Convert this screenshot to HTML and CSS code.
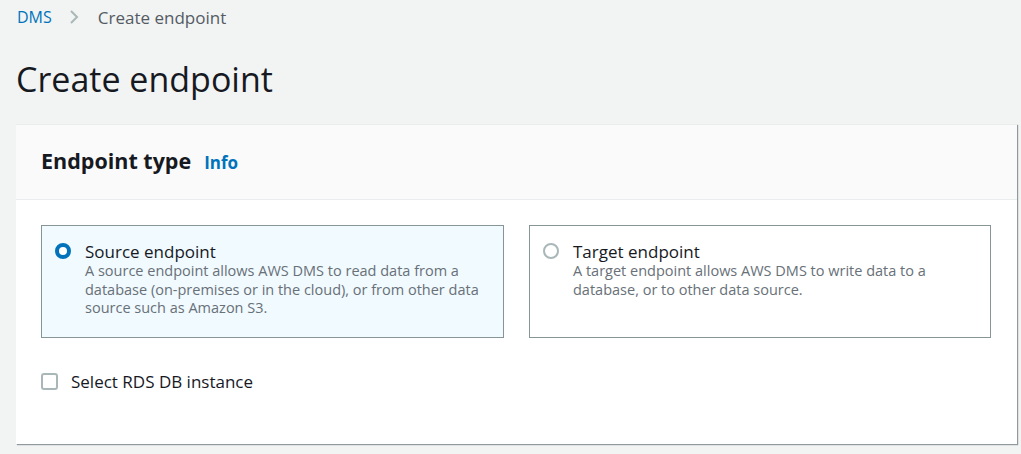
FILE: index.html
```html
<!DOCTYPE html>
<html>
<head>
<meta charset="utf-8">
<link rel="stylesheet" href="styles.css">
</head>
<body>
<nav class="crumbs">
  <a class="crumb-link" href="#">DMS</a>
  <svg class="chev" width="12" height="16" viewBox="0 0 12 16"><path d="M3 2 L9 8 L3 14" fill="none" stroke="#aab7b8" stroke-width="2"/></svg>
  <span class="crumb-current">Create endpoint</span>
</nav>
<h1 class="page-title">Create endpoint</h1>
<section class="panel">
  <header class="panel-head">
    <h2 class="panel-title">Endpoint type</h2>
    <a class="info" href="#">Info</a>
  </header>
  <div class="panel-body">
    <div class="tiles">
      <label class="tile tile-selected">
        <span class="radio radio-on"></span>
        <span class="tile-text">
          <span class="tile-label">Source endpoint</span>
          <span class="tile-desc">A source endpoint allows AWS DMS to read data from a database (on-premises or in the cloud), or from other data source such as Amazon S3.</span>
        </span>
      </label>
      <label class="tile">
        <span class="radio"></span>
        <span class="tile-text">
          <span class="tile-label">Target endpoint</span>
          <span class="tile-desc">A target endpoint allows AWS DMS to write data to a database, or to other data source.</span>
        </span>
      </label>
    </div>
    <label class="check-row">
      <span class="checkbox"></span>
      <span class="check-label">Select RDS DB instance</span>
    </label>
  </div>
</section>
</body>
</html>
```

FILE: styles.css
```css
* { box-sizing: border-box; }
html, body { margin: 0; padding: 0; }
body {
  background: #f2f3f3;
  font-family: "Open Sans", "Liberation Sans", sans-serif;
  color: #16191f;
  width: 1021px;
  height: 454px;
  overflow: hidden;
}
.crumbs {
  display: flex;
  align-items: center;
  height: 34px;
  padding-left: 17px;
  font-size: 16px;
}
.crumb-link { color: #0073bb; text-decoration: none; }
.chev { margin: 0 18px 0 16px; }
.crumb-current { color: #545b64; font-size: 17px; }
.page-title {
  margin: 0;
  padding: 23px 0 0 16px;
  height: 90px;
  font-size: 34px;
  font-weight: 400;
  line-height: 44px;
  color: #16191f;
}
.panel {
  margin: 0 4px 0 16px;
  background: #fff;
  border-top: 1px solid #eaeded;
  box-shadow: 1px 1px 1px 0 rgba(0, 28, 36, 0.3), 1px 1px 1px 0 rgba(0, 28, 36, 0.15);
  height: 320px;
}
.panel-head {
  display: flex;
  align-items: baseline;
  background: #fafafa;
  border-bottom: 1px solid #eaeded;
  height: 75px;
  padding: 22px 25px 0 25px;
}
.panel-title {
  margin: 0;
  font-size: 21.5px;
  font-weight: 700;
  line-height: 28px;
}
.info {
  margin-left: 13px;
  font-size: 17px;
  font-weight: 700;
  color: #0073bb;
  text-decoration: none;
}
.panel-body { padding: 25px 25px 0 25px; }
.tiles {
  display: grid;
  grid-template-columns: 463px 462px;
  gap: 25px;
}
.tile {
  display: flex;
  align-items: flex-start;
  border: 1px solid #879596;
  height: 113px;
  padding: 16px 14px 0 13px;
  background: #fff;
}
.tile-selected { background: #f1faff; }
.radio {
  flex: none;
  width: 16px;
  height: 16px;
  border-radius: 50%;
  border: 2px solid #aab7b8;
  margin-top: 1px;
  margin-right: 14px;
  background: #fff;
}
.radio-on {
  border: 4px solid #0073bb;
}
.tile-text { display: flex; flex-direction: column; }
.tile-label {
  font-size: 17px;
  line-height: 20px;
  color: #16191f;
}
.tile-desc {
  font-size: 14.5px;
  line-height: 18.5px;
  color: #687078;
}
.check-row {
  display: flex;
  align-items: center;
  margin-top: 32px;
}
.checkbox {
  width: 17px;
  height: 17px;
  border: 2px solid #aab7b8;
  border-radius: 3px;
  margin-right: 13px;
  background: #fff;
}
.check-label { font-size: 17px; color: #16191f; }
```
